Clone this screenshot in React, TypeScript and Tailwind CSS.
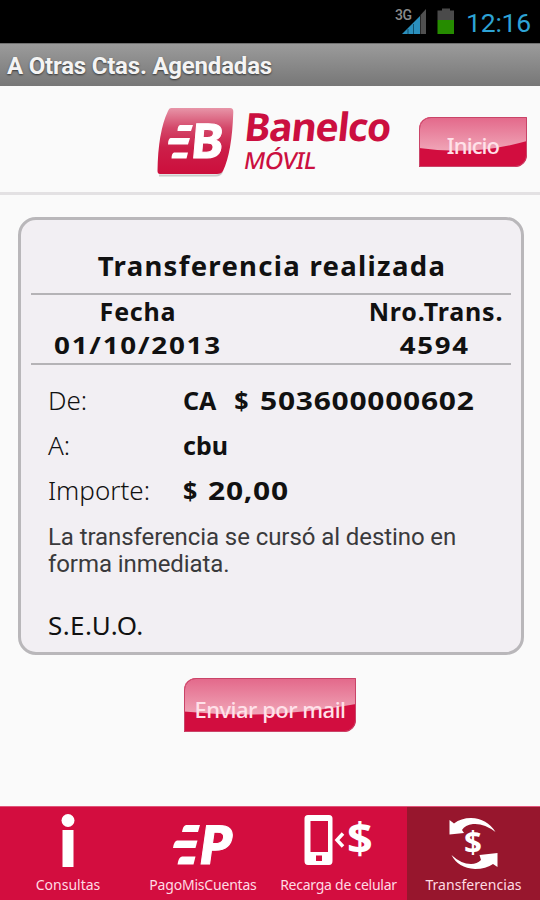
import React from 'react';
import { clsx } from 'clsx';

const BRAND_FONT = "font-['Noto_Sans','Open_Sans',sans-serif]";

const StatusBar: React.FC = () => (
  <div className="h-[43px] bg-black flex items-start justify-end pr-[9px]">
    <svg width="66" height="43" viewBox="0 0 66 43" className="shrink-0">
      <text x="1" y="20" fontFamily="Roboto" fontSize="14" fontWeight="500" fill="#8a8a8a" textLength="17">3G</text>
      <path d="M8 34 L26 16 V34Z" fill="#2a8fbd" />
      <path d="M26.500 15 L32 9 V34 H26.500Z" fill="#505050" />
      <path d="M14 29V34M19.500 24V34" stroke="#12506c" strokeWidth="1" />
      <path d="M43.500 10.500H48V8.500H56V10.500H60V20H43.500Z" fill="#4a4a4a" />
      <path d="M43.500 20H60V34H43.500Z" fill="#268c00" />
    </svg>
    <span className="ml-[6px] mt-[7px] font-[Roboto,sans-serif] text-[26.5px] leading-[32px] text-[#2ea3d5] tracking-[-0.2px]">12:16</span>
  </div>
);

const TitleBar: React.FC<{ title: string }> = ({ title }) => (
  <div className="h-[43px] flex items-center pl-[7px] pt-px bg-linear-to-b from-[#9b9b9b] to-[#777777] border-t border-[#707070]">
    <h1 className="font-[Roboto,sans-serif] font-bold text-[24px] leading-[28px] tracking-[-0.2px] text-[#f4f4f4] whitespace-nowrap [text-shadow:0_1px_2px_rgba(0,0,0,0.6)]">
      {title}
    </h1>
  </div>
);

const BanelcoMark: React.FC = () => (
  <svg width="82" height="74" viewBox="0 0 82 74" className="shrink-0 overflow-visible">
    <defs>
      <linearGradient id="mark" x1="0" y1="0" x2="0" y2="1">
        <stop offset="0" stopColor="#e795a8" />
        <stop offset="0.3" stopColor="#d4486a" />
        <stop offset="0.6" stopColor="#cc1f49" />
        <stop offset="1" stopColor="#cc0e3c" />
      </linearGradient>
    </defs>
    <path d="M4 71.500 H61 Q65 71.500 67 68" stroke="#999" strokeWidth="2" fill="none" opacity="0.5" />
    <path d="M16 4 H75 Q78.500 4 78.300 8 Q77 48 68 67 Q66.500 70 62 70 H5 Q2.500 70 2.500 67 Q3 28 13 7 Q14 4 16 4Z" fill="url(#mark)" />
    <g fill="#fff">
      <path d="M25 21H38L36 27H22.500Q22.500 22 25 21Z" />
      <path d="M15.500 34H35L33 40.500H13Q13 35 15.500 34Z" />
      <path d="M19 48.500H33L31.500 54.500H16.500Q16.500 49.500 19 48.500Z" />
      <text transform="translate(34.500 54) skewX(-5)" fontFamily="Noto Sans" fontSize="48" fontWeight="700" textLength="33" lengthAdjust="spacingAndGlyphs" stroke="#fff" strokeWidth="1">B</text>
    </g>
  </svg>
);

interface GlossyButtonProps {
  id: string;
  width: number;
  height: number;
  className: string;
  children: React.ReactNode;
}

const GlossyButton: React.FC<GlossyButtonProps> = ({ id, width, height, className, children }) => (
  <button className={clsx('relative overflow-hidden shrink-0 rounded-tl-[12px] rounded-br-[12px] bg-[#d20d3f]', BRAND_FONT, className)}>
    <svg width={width} height={height} viewBox="0 0 108 50" preserveAspectRatio="none" className="absolute inset-0">
      <defs>
        <linearGradient id={id} x1="0" y1="0" x2="0" y2="1">
          <stop offset="0" stopColor="#e3688a" />
          <stop offset="1" stopColor="#f0a5b7" />
        </linearGradient>
      </defs>
      <path d="M0 0H108V24Q55 39 0 31Z" fill={`url(#${id})`} />
    </svg>
    <span className="absolute inset-0 rounded-tl-[12px] rounded-br-[12px] border border-[#c94468]" />
    <span className="relative">{children}</span>
  </button>
);

const Header: React.FC = () => (
  <header className="h-[109px] flex items-start border-b-[3px] border-[#e3e1e3] pl-[155px]">
    <div className="mt-[18px]">
      <BanelcoMark />
    </div>
    <div className={clsx('ml-[5px] mt-[22px] w-[177px] text-[#cb0f40] whitespace-nowrap', BRAND_FONT)}>
      <div className="pl-px font-bold text-[39px] leading-[36px] tracking-[-1.2px] origin-bottom-left -skew-x-6">Banelco</div>
      <div className="mt-[3px] font-medium text-[23.5px] leading-[26px] tracking-[-0.6px] origin-bottom-left -skew-x-10">MÓVIL</div>
    </div>
    <GlossyButton id="gloss-home" width={108} height={50} className="mt-[31px] w-[108px] h-[50px] pt-[5px] text-[22px] leading-[26px] tracking-[-0.9px] font-medium text-[#ffe1e9]">
      Inicio
    </GlossyButton>
  </header>
);

const details = [
  { label: 'De:', value: 'CA  $', amount: '503600000602' },
  { label: 'A:', value: 'cbu' },
  { label: 'Importe:', value: '$', amount: '20,00' },
];

const Receipt: React.FC = () => (
  <section className={clsx('mt-[22px] ml-[18px] w-[506px] h-[438px] rounded-[18px] border-[3px] border-[#b9b7ba] bg-[#f2eff3] text-[#111] whitespace-nowrap', BRAND_FONT)}>
    <div className="mx-[10px]">
      <h2 className="h-[73px] pt-[27px] pl-[2px] text-center font-bold text-[27.5px] leading-[38px] tracking-[1.3px]">Transferencia realizada</h2>
      <div className="h-[72px] border-y-2 border-[#b5b3b6] flex justify-between font-bold text-[25px] leading-[33px]">
        <div className="w-[214px] text-center">
          <div className="tracking-[0.8px]">Fecha</div>
          <div className="text-[24px] tracking-[1.5px] scale-x-[1.16]">01/10/2013</div>
        </div>
        <div className="w-[150px] text-center">
          <div className="tracking-[0.8px]">Nro.Trans.</div>
          <div className="pr-[2px] text-[24px] tracking-[1.5px] scale-x-[1.15]">4594</div>
        </div>
      </div>
    </div>
    <dl className="pl-[27px] pt-[13px]">
      {details.map((row) => (
        <div key={row.label} className="flex h-[45px] items-center text-[26px] leading-[45px]">
          <dt className="w-[135px] font-light">{row.label}</dt>
          <dd className="flex font-bold whitespace-pre text-[25px]">
            <span className="[word-spacing:2.5px]">{row.value}</span>
            {row.amount && (
              <span className="ml-[11px] origin-left scale-x-[1.2] tracking-[0.6px]">{row.amount}</span>
            )}
          </dd>
        </div>
      ))}
    </dl>
    <p className="pl-[27px] mt-[11px] font-[Roboto,sans-serif] text-[24px] leading-[27px] tracking-[-0.08px] text-[#3a3a3c]">
      La transferencia se cursó al destino en
      <br />
      forma inmediata.
    </p>
    <p className="pl-[27px] mt-[27px] text-[26px] leading-[40px] tracking-[0.4px]">S.E.U.O.</p>
  </section>
);

const InfoIcon: React.FC = () => (
  <svg width="60" height="64" viewBox="0 0 60 64" fill="#fff">
    <circle cx="30" cy="13.500" r="6.500" />
    <rect x="24.500" y="23" width="11" height="37" />
  </svg>
);

const PagoIcon: React.FC = () => (
  <svg width="64" height="64" viewBox="0 0 64 64" fill="#fff" className="overflow-visible">
    <path d="M15 18H29L27 25H11Q12 18.500 15 18Z" />
    <path d="M6 33.500H26.500L24.500 41H2Q3 34 6 33.500Z" />
    <path d="M11 49.500H24.500L22.500 57.500H6.500Q7.500 50 11 49.500Z" />
    <text transform="translate(25.500 57) skewX(-8)" fontFamily="Noto Sans" fontSize="54" fontWeight="700" textLength="34" lengthAdjust="spacingAndGlyphs" stroke="#fff" strokeWidth="1">P</text>
  </svg>
);

const RecargaIcon: React.FC = () => (
  <svg width="70" height="64" viewBox="0 0 70 64" fill="#fff" className="overflow-visible">
    <path fillRule="evenodd" d="M4 8H25Q28.500 8 28.500 11.500V54Q28.500 58 25 58H4Q0.500 58 0.500 54V11.500Q0.500 8 4 8ZM6.500 14V45H24V14ZM12 48.500V54H18V48.500Z" />
    <path d="M39 26.500L33 33L39 39.500" fill="none" stroke="#fff" strokeWidth="3.500" />
    <text x="43" y="47" fontFamily="Noto Sans" fontSize="43" fontWeight="700" textLength="25.5" lengthAdjust="spacingAndGlyphs">$</text>
  </svg>
);

const TransferIcon: React.FC = () => (
  <svg width="60" height="64" viewBox="0 0 60 64" fill="#fff" className="overflow-visible">
    <path d="M5.500 13L10 16.500Q17 11 27 11Q43 11.500 51.500 25Q40 16 29 17Q21 18 18 23L20 26L5.500 27.500Z" />
    <path d="M7.500 48Q17 57 27 57Q33 57 37 53L35.500 48L53.500 46V60L49 57Q42 62 31 62Q14 61 7.500 48Z" />
    <text x="20" y="46" fontFamily="Noto Sans" fontSize="30" fontWeight="700" textLength="18" lengthAdjust="spacingAndGlyphs">$</text>
  </svg>
);

const tabs = [
  { label: 'Consultas', icon: InfoIcon, className: 'w-[136px] tracking-[0px]' },
  { label: 'PagoMisCuentas', icon: PagoIcon, className: 'w-[134px] tracking-[-0.2px]' },
  { label: 'Recarga de celular', icon: RecargaIcon, className: 'w-[137px] tracking-[-0.25px]' },
  { label: 'Transferencias', icon: TransferIcon, className: 'w-[133px] tracking-[0.05px] bg-[#97162d]' },
];

const TabBar: React.FC = () => (
  <nav className="h-[94px] flex bg-[#d30d3f] border-t border-[#e0557a]">
    {tabs.map(({ label, icon: Icon, className }) => (
      <button key={label} className={clsx('flex flex-col items-center whitespace-nowrap', className)}>
        <Icon />
        <span className={clsx('mt-[4px] text-[14px] leading-[20px] text-[#ffdbe4]', BRAND_FONT)}>{label}</span>
      </button>
    ))}
  </nav>
);

export default function App() {
  return (
    <div className="w-[540px] h-[900px] flex flex-col overflow-hidden bg-[#fafafa]">
      <StatusBar />
      <TitleBar title="A Otras Ctas. Agendadas" />
      <Header />
      <main className="flex-1">
        <Receipt />
        <div className="flex pl-[184px] mt-[23px]">
          <GlossyButton id="gloss-mail" width={172} height={54} className="w-[172px] h-[54px] pt-[7px] text-[22px] leading-[26px] tracking-[-0.5px] font-medium text-[#ffe1e9]">
            Enviar por mail
          </GlossyButton>
        </div>
      </main>
      <TabBar />
    </div>
  );
}
